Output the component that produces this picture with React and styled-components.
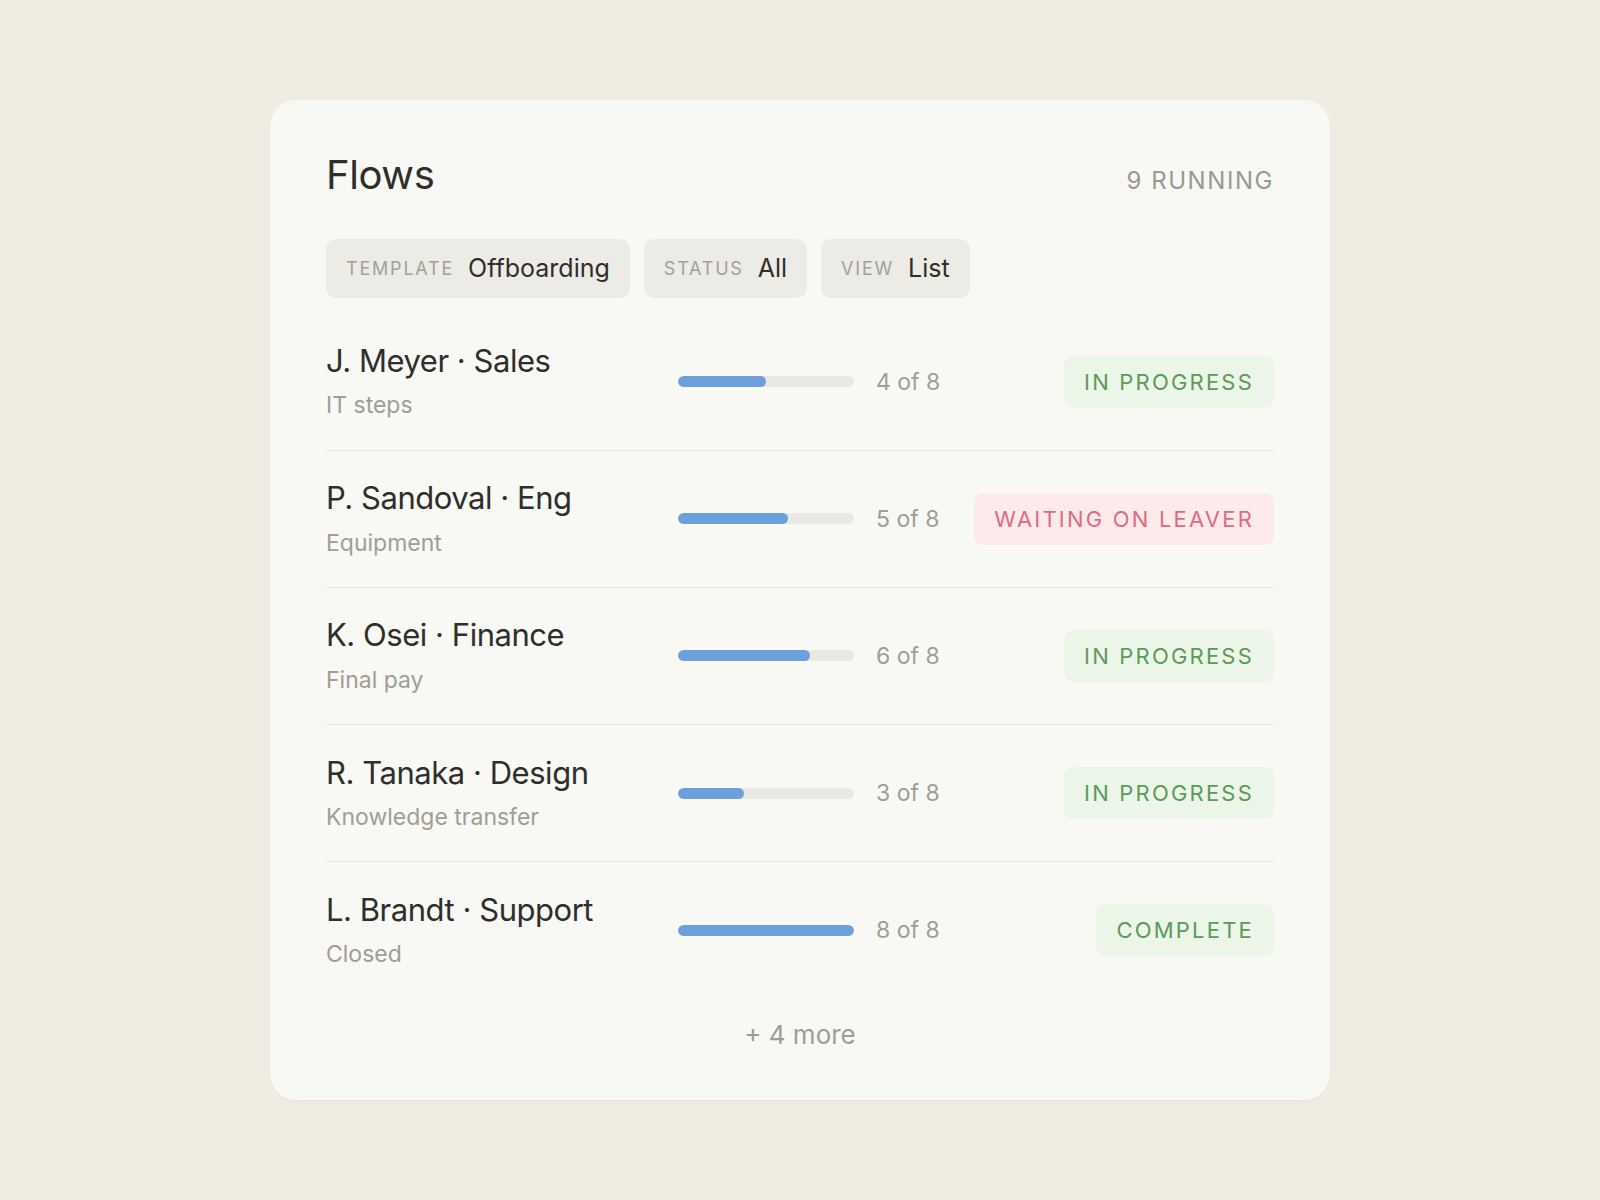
import styled, { createGlobalStyle } from 'styled-components';

const GlobalStyle = createGlobalStyle`
    html, body {
        margin: 0;
        padding: 0;
        background: #f1ece1;
    }

    body {
        font-family: Inter, "Noto Sans", sans-serif;
        color: #2f2e2b;
    }
`;

const Page = styled.div`
    min-height: 1200px;
    display: flex;
    align-items: center;
    justify-content: center;
`;

const Card = styled.div`
    width: 1060px;
    box-sizing: border-box;
    padding: 51px 56px 50px;
    background: #f8f8f4;
    border-radius: 26px;
    box-shadow: 0 1px 2px rgba(120, 110, 90, 0.06);
`;

const Header = styled.div`
    display: flex;
    justify-content: space-between;
    align-items: baseline;
`;

const Title = styled.h1`
    margin: 0;
    font-size: 40px;
    font-weight: 400;
    line-height: 1.2;
    letter-spacing: -0.01em;
    color: #2f2e2b;
`;

const Running = styled.span`
    font-size: 24px;
    letter-spacing: 0.065em;
    color: #9b9893;
`;

const Filters = styled.div`
    display: flex;
    gap: 14px;
    margin-top: 40px;
    margin-bottom: 16px;
`;

const Chip = styled.div`
    height: 59px;
    display: flex;
    align-items: center;
    gap: 14px;
    padding: 0 20px;
    background: #ecebe6;
    border-radius: 10px;
`;

const ChipLabel = styled.span`
    font-size: 18px;
    letter-spacing: 0.1em;
    color: #a3a09a;
`;

const ChipValue = styled.span`
    font-size: 25px;
    color: #2f2e2b;
`;

const Row = styled.div`
    display: grid;
    grid-template-columns: 330px 176px 1fr auto;
    column-gap: 22px;
    align-items: center;
    padding: 28.5px 0;
    border-bottom: ${p => (p.$last ? 'none' : '1px solid #e5e3de')};
`;

const Who = styled.div`
    display: flex;
    flex-direction: column;
    gap: 12px;
`;

const Name = styled.div`
    font-size: 31px;
    line-height: 1.2;
    letter-spacing: -0.015em;
    color: #2f2e2b;
    white-space: nowrap;
`;

const Sub = styled.div`
    font-size: 23px;
    line-height: 1.3;
    color: #a09d97;
`;

const Track = styled.div`
    height: 11px;
    border-radius: 6px;
    background: #e9e8e4;
    overflow: hidden;
`;

const Fill = styled.div`
    height: 100%;
    border-radius: 6px;
    background: #6ca0dc;
`;

const Count = styled.span`
    font-size: 23px;
    color: #a09d97;
    white-space: nowrap;
`;

const tones = {
    green: { bg: '#ecf6e8', fg: '#5b9a57' },
    red: { bg: '#fdebec', fg: '#e06b7c' },
};

const Badge = styled.span`
    justify-self: end;
    height: 52px;
    display: flex;
    align-items: center;
    padding: 0 20px;
    border-radius: 9px;
    font-size: 22px;
    letter-spacing: 0.1em;
    white-space: nowrap;
    background: ${p => tones[p.$tone].bg};
    color: ${p => tones[p.$tone].fg};
`;

const More = styled.div`
    text-align: center;
    margin-top: 21px;
    font-size: 26px;
    color: #a09d97;
`;

const flows = [
    { name: 'J. Meyer · Sales', step: 'IT steps', done: 4, status: 'IN PROGRESS', tone: 'green' },
    { name: 'P. Sandoval · Eng', step: 'Equipment', done: 5, status: 'WAITING ON LEAVER', tone: 'red' },
    { name: 'K. Osei · Finance', step: 'Final pay', done: 6, status: 'IN PROGRESS', tone: 'green' },
    { name: 'R. Tanaka · Design', step: 'Knowledge transfer', done: 3, status: 'IN PROGRESS', tone: 'green' },
    { name: 'L. Brandt · Support', step: 'Closed', done: 8, status: 'COMPLETE', tone: 'green' },
];

const App = () => {
    return (
        <Page>
            <GlobalStyle />
            <Card>
                <Header>
                    <Title>Flows</Title>
                    <Running>9 RUNNING</Running>
                </Header>

                <Filters>
                    <Chip><ChipLabel>TEMPLATE</ChipLabel><ChipValue>Offboarding</ChipValue></Chip>
                    <Chip><ChipLabel>STATUS</ChipLabel><ChipValue>All</ChipValue></Chip>
                    <Chip><ChipLabel>VIEW</ChipLabel><ChipValue>List</ChipValue></Chip>
                </Filters>

                {flows.map((f, i) => (
                    <Row key={f.name} $last={i === flows.length - 1}>
                        <Who>
                            <Name>{f.name}</Name>
                            <Sub>{f.step}</Sub>
                        </Who>
                        <Track>
                            <Fill style={{ width: `${(f.done / 8) * 100}%` }} />
                        </Track>
                        <Count>{f.done} of 8</Count>
                        <Badge $tone={f.tone}>{f.status}</Badge>
                    </Row>
                ))}

                <More>+ 4 more</More>
            </Card>
        </Page>
    );
};

export default App;
